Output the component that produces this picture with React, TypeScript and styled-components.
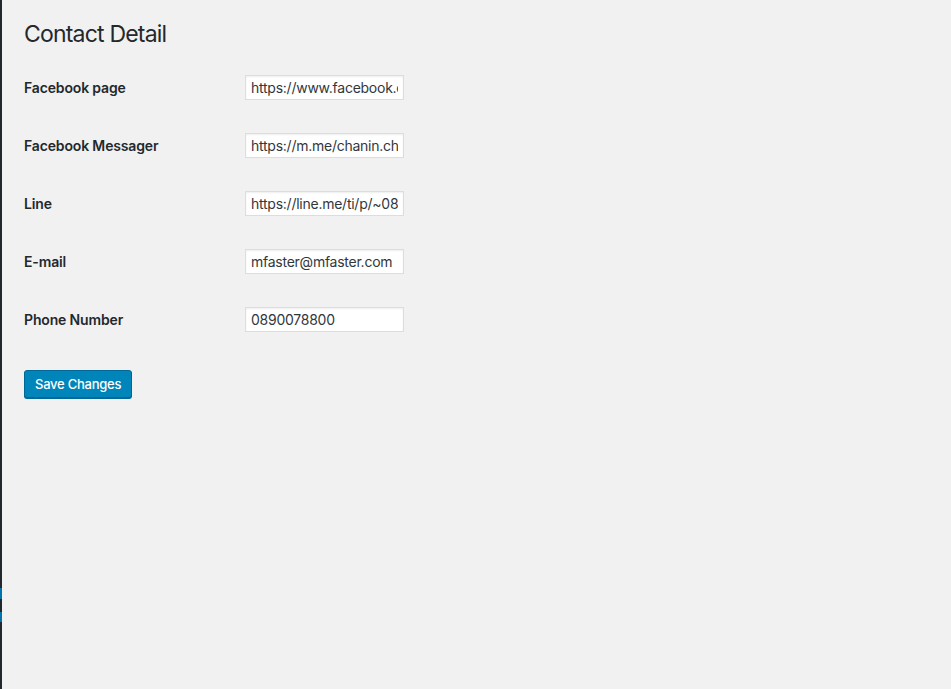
import React from "react";
import styled, { createGlobalStyle } from "styled-components";

const Global = createGlobalStyle`
  html, body { margin: 0; padding: 0; background: #f1f1f1; }
  body { font-family: Inter, "Noto Sans", sans-serif; color: #23282d; }
  * { box-sizing: border-box; }
`;

const Shell = styled.div`
  display: flex;
  min-height: 689px;
  background: #f1f1f1;
`;

const MenuEdge = styled.div`
  width: 2px;
  display: flex;
  flex-direction: column;
  flex: none;
`;

const EdgeSeg = styled.div<{ $h?: number; $blue?: boolean }>`
  height: ${(p) => (p.$h ? `${p.$h}px` : "auto")};
  flex: ${(p) => (p.$h ? "none" : "1")};
  background: ${(p) => (p.$blue ? "#0073aa" : "#23282d")};
`;

const Main = styled.main`
  flex: 1;
  padding: 19px 0 0 22px;
`;

const Title = styled.h1`
  margin: 0 0 9px;
  font-size: 23px;
  font-weight: 400;
  line-height: 30px;
  letter-spacing: -0.8px;
  color: #23282d;
`;

const Row = styled.div`
  display: grid;
  grid-template-columns: 221px 159px;
  align-items: center;
  padding: 17px 0 16px;
`;

const Label = styled.label`
  font-size: 14px;
  font-weight: 600;
  letter-spacing: -0.15px;
  color: #23282d;
`;

const Input = styled.input`
  height: 25px;
  width: 159px;
  padding: 0 5px;
  border: 1px solid #ddd;
  background: #fff;
  box-shadow: inset 0 1px 2px rgba(0, 0, 0, 0.07);
  font-family: inherit;
  font-size: 14px;
  letter-spacing: -0.25px;
  color: #32373c;
  outline: none;
`;

const Actions = styled.div`
  padding-top: 22px;
`;

const Button = styled.button`
  height: 28px;
  padding: 0 10px 1px;
  border: 1px solid #006799;
  border-radius: 3px;
  background: #0085ba;
  color: #fff;
  font-family: inherit;
  font-size: 13px;
  font-weight: 500;
  letter-spacing: -0.25px;
  box-shadow: 0 1px 0 #006799;
  cursor: pointer;
`;

const fields = [
  { label: "Facebook page", value: "https://www.facebook.com/mfaster" },
  { label: "Facebook Messager", value: "https://m.me/chanin.chan" },
  { label: "Line", value: "https://line.me/ti/p/~0890078800" },
  { label: "E-mail", value: "mfaster@mfaster.com" },
  { label: "Phone Number", value: "0890078800" },
];

export default function App() {
  return (
    <>
      <Global />
      <Shell>
        <MenuEdge>
          <EdgeSeg $h={588} />
          <EdgeSeg $h={11} $blue />
          <EdgeSeg $h={13} />
          <EdgeSeg $h={10} $blue />
          <EdgeSeg />
        </MenuEdge>
        <Main>
          <Title>Contact Detail</Title>
          {fields.map((f) => (
            <Row key={f.label}>
              <Label>{f.label}</Label>
              <Input defaultValue={f.value} />
            </Row>
          ))}
          <Actions>
            <Button>Save Changes</Button>
          </Actions>
        </Main>
      </Shell>
    </>
  );
}
